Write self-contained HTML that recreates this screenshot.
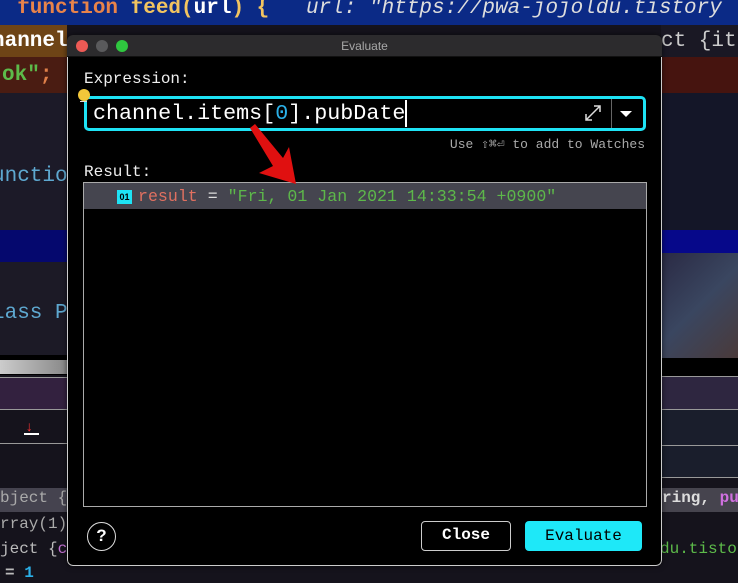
<!DOCTYPE html>
<html><head><meta charset="utf-8"><style>
*{margin:0;padding:0;box-sizing:border-box}
body{width:738px;height:583px;overflow:hidden;background:#15131c;position:relative;font-family:"Liberation Mono","DejaVu Sans Mono",monospace}
.a{position:absolute;white-space:nowrap}
.code{position:absolute;font-weight:bold;font-size:21px;white-space:nowrap}
</style></head><body>
<div class="a" style="left:0;top:0;width:738px;height:25px;background:#0b2a86"></div>
<div class="code" style="left:-8px;top:-3px;color:#e8834a">: function <span style="color:#f2c460">feed(</span><span style="color:#fff">url</span><span style="color:#f2c460">) {</span></div>
<div class="code" style="left:306px;top:-3px;color:#ddd;font-style:italic;font-weight:normal">url: "https://pwa-jojoldu.tistory</div>
<div class="a" style="left:0;top:25px;width:67px;height:32px;background:#6e4416"></div>
<div class="code" style="left:-8px;top:30px;color:#fff">hannel</div>
<div class="a" style="left:0;top:57px;width:67px;height:36px;background:#4a1c12"></div>
<div class="code" style="left:2px;top:64px;color:#5dbb4a">ok"<span style="color:#e0804a">;</span></div>
<div class="a" style="left:0;top:93px;width:67px;height:137px;background:#1c1a28"></div>
<div class="code" style="left:-8px;top:165px;color:#5ea8d0;font-weight:normal">unctio</div>
<div class="a" style="left:0;top:230px;width:67px;height:32px;background:#05086e"></div>
<div class="a" style="left:0;top:262px;width:67px;height:93px;background:#1c1a26"></div>
<div class="code" style="left:-8px;top:302px;color:#5ea8d0;font-weight:normal">lass P</div>
<div class="a" style="left:0;top:355px;width:67px;height:20px;background:#000"></div>
<div class="a" style="left:0;top:360px;width:67px;height:14px;background:linear-gradient(90deg,#ccc,#888)"></div>
<div class="a" style="left:0;top:377px;width:67px;height:33px;background:#33213f;border-top:1px solid #999;border-bottom:1px solid #999"></div>
<div class="a" style="left:0;top:410px;width:67px;height:34px;background:#15131c;border-bottom:1px solid #999"></div>
<div class="a" style="left:25px;top:420px;width:14px;height:16px;color:#f33;font-size:14px;font-weight:bold">↓</div>
<div class="a" style="left:24px;top:433px;width:15px;height:2px;background:#fff"></div>
<div class="a" style="left:0;top:488px;width:67px;height:24px;background:#45434f"></div>
<div class="a" style="left:0;top:489px;color:#aaa;font-size:16px">bject {</div>
<div class="a" style="left:0;top:515px;color:#aaa;font-size:16px">rray(1)</div>
<div class="a" style="left:0;top:540px;color:#bbb;font-size:16px">ject {<span style="color:#c070d0">c</span></div>
<div class="a" style="left:5px;top:564px;color:#bbb;font-size:16px;font-weight:bold">= <span style="color:#2bb0e8">1</span></div>

<div class="a" style="left:661px;top:25px;width:77px;height:32px;background:#1a1824"></div>
<div class="code" style="left:661px;top:30px;color:#ccc;font-weight:normal">ct {ite</div>
<div class="a" style="left:661px;top:57px;width:77px;height:36px;background:#46140f"></div>
<div class="a" style="left:661px;top:93px;width:77px;height:137px;background:#141628"></div>
<div class="a" style="left:661px;top:230px;width:77px;height:23px;background:#06088a"></div>
<div class="a" style="left:661px;top:253px;width:77px;height:105px;background:linear-gradient(135deg,#2a2a44,#3a4660 50%,#4a3a3a)"></div>
<div class="a" style="left:661px;top:358px;width:77px;height:19px;background:#000"></div>
<div class="a" style="left:661px;top:376px;width:77px;height:34px;background:#2e2640;border-top:1px solid #999;border-bottom:1px solid #999"></div>
<div class="a" style="left:661px;top:410px;width:77px;height:68px;background:#1a1e2c;border-bottom:1px solid #999"></div>
<div class="a" style="left:661px;top:445px;width:77px;height:1px;background:#999"></div>
<div class="a" style="left:661px;top:488px;width:77px;height:24px;background:#46444e"></div>
<div class="a" style="left:662px;top:489px;color:#ddd;font-size:16px;font-weight:bold">ring, <span style="color:#d070e0">pu</span></div>
<div class="a" style="left:660px;top:540px;color:#5dbb4a;font-size:16px">du.tisto</div>

<div class="a" style="left:67px;top:35px;width:595px;height:531px;background:#000;border-radius:6px;overflow:hidden;box-shadow:0 0 6px rgba(0,0,0,.6)">
 <div class="a" style="left:0;top:0;width:595px;height:22px;background:#2c2b2d;border-bottom:1px solid #111"></div>
 <div class="a" style="left:9px;top:5px;width:12px;height:12px;border-radius:50%;background:#ed5a55"></div>
 <div class="a" style="left:29px;top:5px;width:12px;height:12px;border-radius:50%;background:#5a5a5c"></div>
 <div class="a" style="left:49px;top:5px;width:12px;height:12px;border-radius:50%;background:#2fc73f"></div>
 <div class="a" style="left:0;top:4px;width:595px;text-align:center;color:#a8a8a8;font-family:'Liberation Sans',sans-serif;font-size:12px">Evaluate</div>
 <div class="a" style="left:0;top:22px;width:595px;height:509px;border:1px solid #ccc;border-top:none;border-radius:0 0 6px 6px"></div>
</div>
<div class="a" style="left:84px;top:70px;color:#eee;font-size:16px">Expression:</div>
<div class="a" style="left:84px;top:96px;width:562px;height:35px;border:3px solid #1ee3f5;border-radius:5px;background:#000"></div>
<div class="a" style="left:611px;top:99px;width:1px;height:29px;background:#666"></div>
<div class="a" style="left:620px;top:111px;width:0;height:0;border-left:6px solid transparent;border-right:6px solid transparent;border-top:6px solid #fff"></div>
<svg class="a" style="left:584px;top:104px" width="18" height="18" viewBox="0 0 18 18"><path d="M2 16L16 2M10 2h6v6M2 10v6h6" stroke="#ddd" stroke-width="1.5" fill="none"/></svg>
<div class="a" style="left:78px;top:89px;width:12px;height:12px;border-radius:50%;background:#f2c63a"></div>
<div class="a" style="left:80px;top:101px;width:7px;height:1px;background:#ddd"></div>
<div class="a" style="left:93px;top:99px;color:#fff;font-size:21.7px;line-height:30px">channel.items[<span style="color:#2bb0e8">0</span>].pubDate</div>
<div class="a" style="left:405px;top:100px;width:2px;height:27px;background:#fff"></div>
<div class="a" style="right:93px;top:137px;color:#aaa;font-size:13px">Use ⇧⌘⏎ to add to Watches</div>
<div class="a" style="left:84px;top:163px;color:#eee;font-size:16px">Result:</div>
<div class="a" style="left:83px;top:182px;width:564px;height:325px;border:1px solid #aaa"></div>
<div class="a" style="left:84px;top:183px;width:562px;height:26px;background:#45454f"></div>
<div class="a" style="left:117px;top:190px;width:15px;height:14px;background:#1ee3f5;color:#000;font-size:9px;font-weight:bold;text-align:center;line-height:14px;font-family:'Liberation Sans',sans-serif">01</div>
<div class="a" style="left:138px;top:187px;font-size:16.6px;color:#e07060">result <span style="color:#ddd">=</span> <span style="color:#5db84a">"Fri, 01 Jan 2021 14:33:54 +0900"</span></div>
<svg class="a" style="left:240px;top:120px" width="70" height="70"><polygon points="10,8 15,4 43,38 49,27 56,64 19,53 33,46" fill="#e01010"/></svg>
<div class="a" style="left:87px;top:522px;width:29px;height:29px;border:1.5px solid #ddd;border-radius:50%;color:#fff;text-align:center;line-height:26px;font-size:17px;font-weight:bold;font-family:'Liberation Sans',sans-serif">?</div>
<div class="a" style="left:421px;top:521px;width:90px;height:30px;border:1.5px solid #ccc;border-radius:4px;color:#fff;text-align:center;line-height:27px;font-size:16px;font-weight:bold">Close</div>
<div class="a" style="left:525px;top:521px;width:117px;height:30px;background:#1ee8f8;border-radius:4px;color:#000;text-align:center;line-height:30px;font-size:16px">Evaluate</div>
</body></html>
